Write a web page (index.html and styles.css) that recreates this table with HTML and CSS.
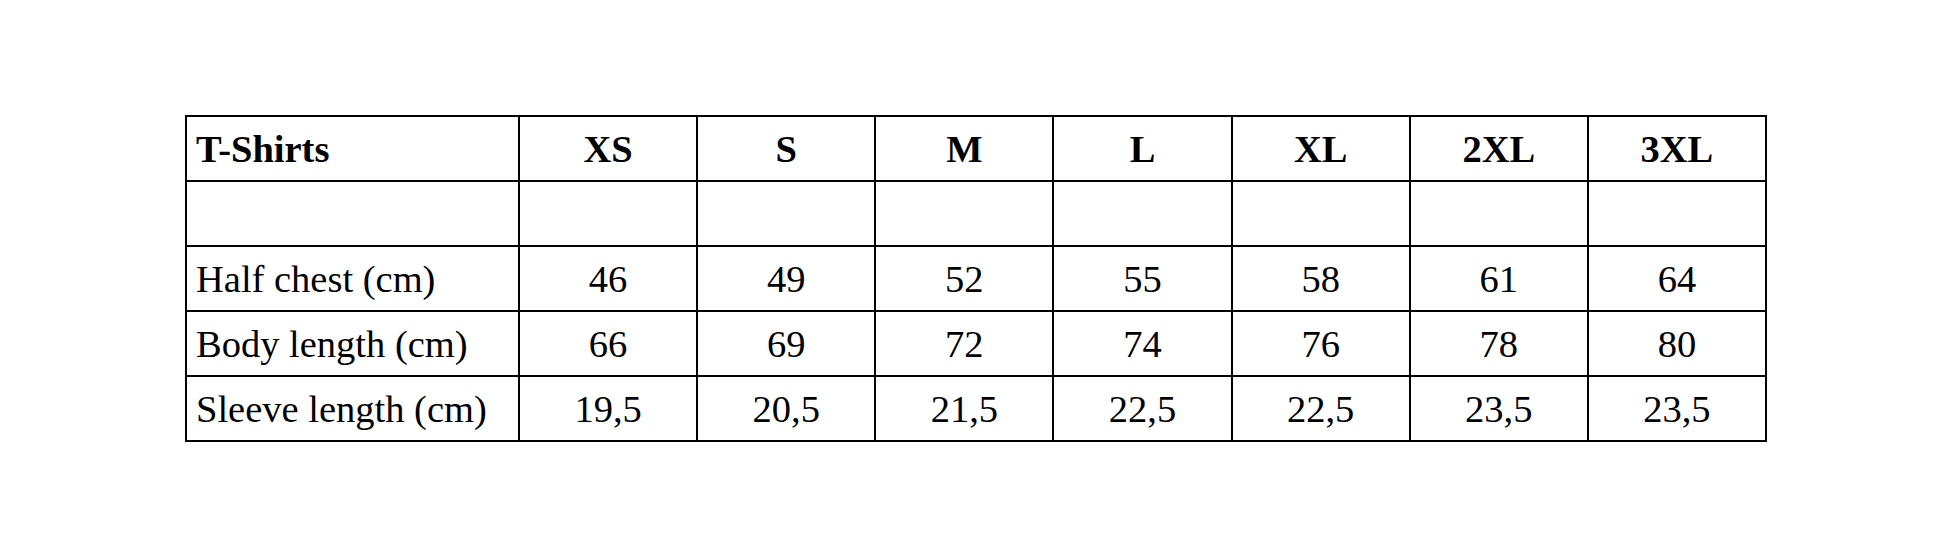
FILE: index.html
```html
<!DOCTYPE html>
<html lang="en">
<head>
<meta charset="utf-8">
<title>T-Shirts size chart</title>
<link rel="stylesheet" href="styles.css">
</head>
<body>
<main class="page">
  <table class="sizes">
    <colgroup>
      <col class="c-label">
      <col class="c-size"><col class="c-size"><col class="c-size"><col class="c-size">
      <col class="c-size"><col class="c-size"><col class="c-size">
    </colgroup>
    <thead>
      <tr class="head">
        <th class="label">T-Shirts</th>
        <th>XS</th><th>S</th><th>M</th><th>L</th><th>XL</th><th>2XL</th><th>3XL</th>
      </tr>
    </thead>
    <tbody>
      <tr><td class="label"></td><td></td><td></td><td></td><td></td><td></td><td></td><td></td></tr>
      <tr><td class="label">Half chest (cm)</td><td>46</td><td>49</td><td>52</td><td>55</td><td>58</td><td>61</td><td>64</td></tr>
      <tr><td class="label">Body length (cm)</td><td>66</td><td>69</td><td>72</td><td>74</td><td>76</td><td>78</td><td>80</td></tr>
      <tr><td class="label">Sleeve length (cm)</td><td>19,5</td><td>20,5</td><td>21,5</td><td>22,5</td><td>22,5</td><td>23,5</td><td>23,5</td></tr>
    </tbody>
  </table>
</main>
</body>
</html>
```
FILE: styles.css
```css
html, body {
  margin: 0;
  padding: 0;
  background: #ffffff;
}
.page {
  padding: 115px 0 0 185px;
  font-family: "Liberation Serif", serif;
}
.sizes {
  border-collapse: collapse;
  table-layout: fixed;
  width: 1581px;
  font-family: "Liberation Serif", serif;
  font-size: 38.5px;
  color: #000;
}
.c-label { width: 333px; }
.c-size { width: 178.15px; }
.sizes th,
.sizes td {
  border: 2px solid #000;
  height: 63px;
  padding: 0;
  text-align: center;
  vertical-align: middle;
  line-height: 44px;
  white-space: nowrap;
}
.sizes th { font-weight: bold; }
.sizes .label {
  text-align: left;
  padding-left: 9px;
}
```
